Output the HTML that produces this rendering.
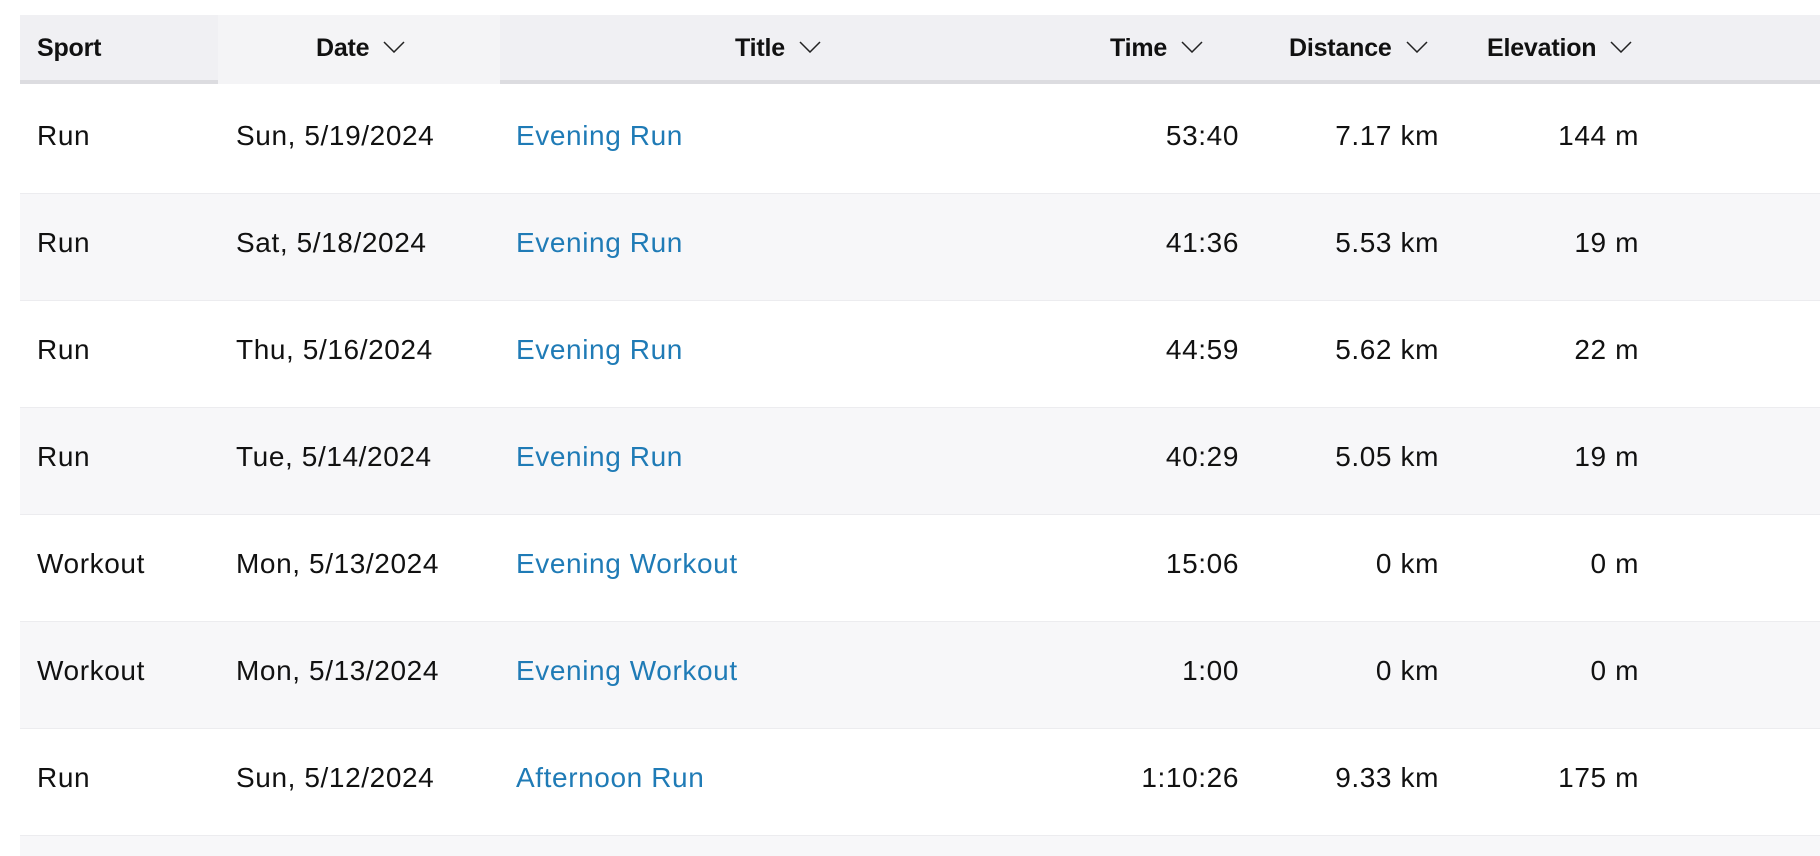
<!DOCTYPE html>
<html><head><style>
*{margin:0;padding:0;box-sizing:border-box}
body{width:1820px;height:848px;background:#fff;font-family:"Liberation Sans",Arial,sans-serif;color:#111;overflow:hidden;position:relative}
.hdr{position:absolute;left:20px;top:15px;width:1800px;height:69px;background:#f0f0f3;border-bottom:4px solid #dcdce0}
.hdr .dcell{position:absolute;left:198px;top:0;width:282px;height:69px;background:#f4f4f6}
.h{position:absolute;top:19px;font-weight:bold;font-size:25px;letter-spacing:-0.2px;white-space:nowrap}
.h svg{vertical-align:middle;margin-left:14px;margin-top:-4px}
.row{position:absolute;left:20px;width:1800px;height:107px;border-bottom:1px solid #ececef}
.row.alt{background:#f7f7f9}
.c{position:absolute;top:-4px;line-height:106px;font-size:28px;white-space:nowrap;letter-spacing:0.6px}
.a{color:#1f7bb6}
.r{text-align:right}
</style></head><body>
<div class="hdr"><div class="dcell"></div>
<div class="h" style="left:17px">Sport</div>
<div class="h" style="left:296px">Date<svg width="22" height="12" viewBox="0 0 22 12"><path d="M1 1L11 11L21 1" fill="none" stroke="#222" stroke-width="1.5"/></svg></div>
<div class="h" style="left:715px">Title<svg width="22" height="12" viewBox="0 0 22 12"><path d="M1 1L11 11L21 1" fill="none" stroke="#222" stroke-width="1.5"/></svg></div>
<div class="h" style="left:1090px">Time<svg width="22" height="12" viewBox="0 0 22 12"><path d="M1 1L11 11L21 1" fill="none" stroke="#222" stroke-width="1.5"/></svg></div>
<div class="h" style="left:1269px">Distance<svg width="22" height="12" viewBox="0 0 22 12"><path d="M1 1L11 11L21 1" fill="none" stroke="#222" stroke-width="1.5"/></svg></div>
<div class="h" style="left:1467px">Elevation<svg width="22" height="12" viewBox="0 0 22 12"><path d="M1 1L11 11L21 1" fill="none" stroke="#222" stroke-width="1.5"/></svg></div>
</div>

<div class="row" style="top:87px"><div class="c" style="left:17px">Run</div><div class="c" style="left:216px">Sun, 5/19/2024</div><div class="c a" style="left:496px">Evening Run</div><div class="c r" style="right:581px">53:40</div><div class="c r" style="right:381px">7.17 km</div><div class="c r" style="right:181px">144 m</div></div>
<div class="row alt" style="top:194px"><div class="c" style="left:17px">Run</div><div class="c" style="left:216px">Sat, 5/18/2024</div><div class="c a" style="left:496px">Evening Run</div><div class="c r" style="right:581px">41:36</div><div class="c r" style="right:381px">5.53 km</div><div class="c r" style="right:181px">19 m</div></div>
<div class="row" style="top:301px"><div class="c" style="left:17px">Run</div><div class="c" style="left:216px">Thu, 5/16/2024</div><div class="c a" style="left:496px">Evening Run</div><div class="c r" style="right:581px">44:59</div><div class="c r" style="right:381px">5.62 km</div><div class="c r" style="right:181px">22 m</div></div>
<div class="row alt" style="top:408px"><div class="c" style="left:17px">Run</div><div class="c" style="left:216px">Tue, 5/14/2024</div><div class="c a" style="left:496px">Evening Run</div><div class="c r" style="right:581px">40:29</div><div class="c r" style="right:381px">5.05 km</div><div class="c r" style="right:181px">19 m</div></div>
<div class="row" style="top:515px"><div class="c" style="left:17px">Workout</div><div class="c" style="left:216px">Mon, 5/13/2024</div><div class="c a" style="left:496px">Evening Workout</div><div class="c r" style="right:581px">15:06</div><div class="c r" style="right:381px">0 km</div><div class="c r" style="right:181px">0 m</div></div>
<div class="row alt" style="top:622px"><div class="c" style="left:17px">Workout</div><div class="c" style="left:216px">Mon, 5/13/2024</div><div class="c a" style="left:496px">Evening Workout</div><div class="c r" style="right:581px">1:00</div><div class="c r" style="right:381px">0 km</div><div class="c r" style="right:181px">0 m</div></div>
<div class="row" style="top:729px"><div class="c" style="left:17px">Run</div><div class="c" style="left:216px">Sun, 5/12/2024</div><div class="c a" style="left:496px">Afternoon Run</div><div class="c r" style="right:581px">1:10:26</div><div class="c r" style="right:381px">9.33 km</div><div class="c r" style="right:181px">175 m</div></div>
<div class="row alt" style="top:836px;height:20px;border:none"></div>
</body></html>
